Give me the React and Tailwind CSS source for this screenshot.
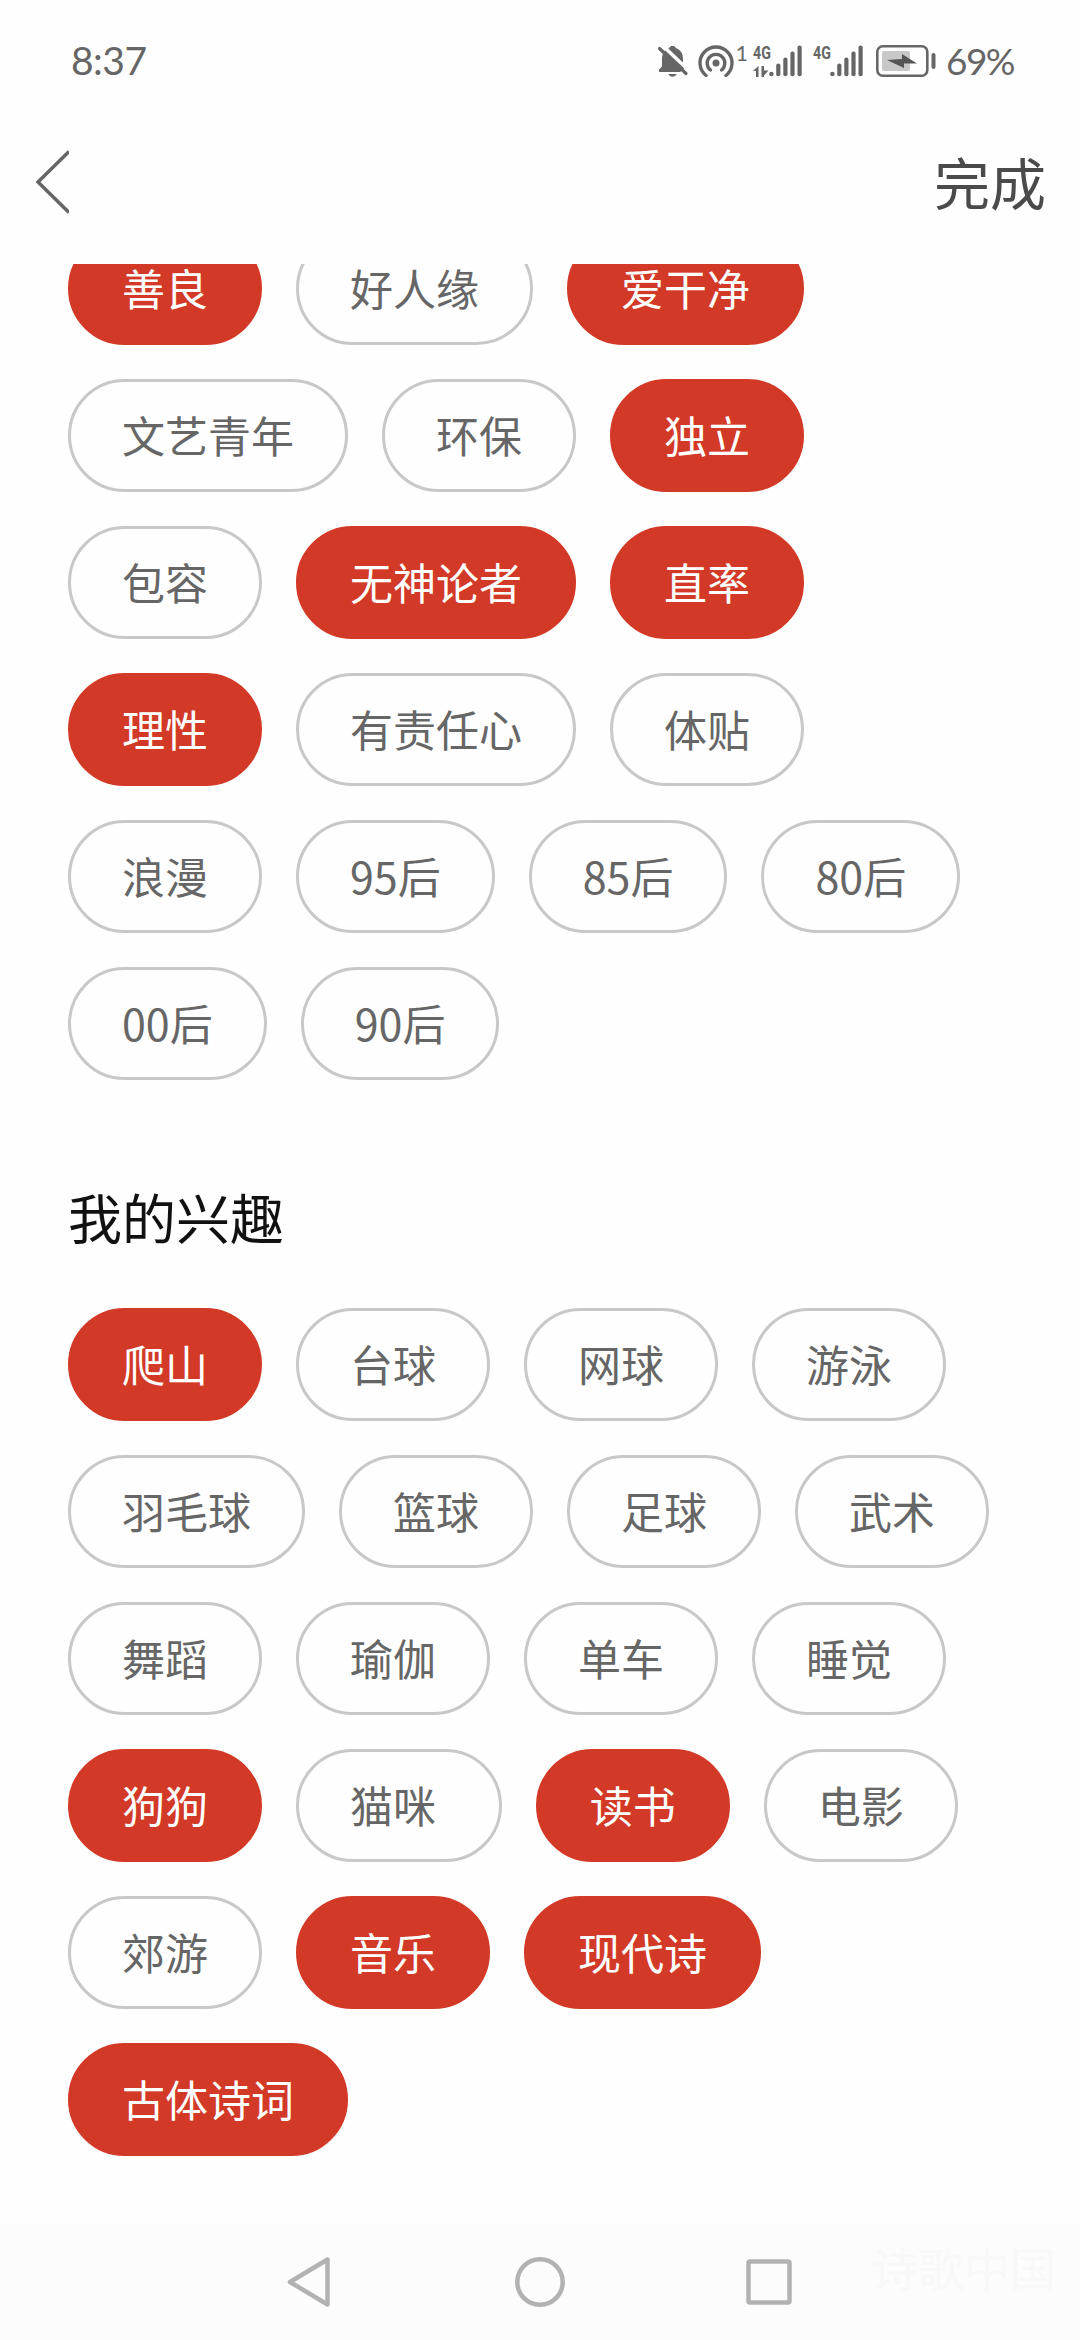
import { useState } from 'react';

const FONT = "font-['Noto_Sans_CJK_SC',sans-serif]";

const personalityRows = [
  ['善良', '好人缘', '爱干净'],
  ['文艺青年', '环保', '独立'],
  ['包容', '无神论者', '直率'],
  ['理性', '有责任心', '体贴'],
  ['浪漫', '95后', '85后', '80后'],
  ['00后', '90后'],
];

const hobbyRows = [
  ['爬山', '台球', '网球', '游泳'],
  ['羽毛球', '篮球', '足球', '武术'],
  ['舞蹈', '瑜伽', '单车', '睡觉'],
  ['狗狗', '猫咪 ', '读书', '电影'],
  ['郊游', '音乐', '现代诗'],
  ['古体诗词'],
];

const defaultSelected = [
  '善良', '爱干净', '独立', '无神论者', '直率', '理性',
  '爬山', '狗狗', '读书', '音乐', '现代诗', '古体诗词',
];

const SignalBars = () => (
  <svg width="34" height="32" viewBox="0 0 34 32" fill="#666">
    <circle cx="2.4" cy="29" r="2.3" />
    <rect x="7.2" y="18.5" width="4.2" height="12.7" rx="2" />
    <rect x="14.3" y="12.5" width="4.2" height="18.7" rx="2" />
    <rect x="21.4" y="6.5" width="4.2" height="24.7" rx="2" />
    <rect x="28.5" y="0.5" width="4.2" height="30.7" rx="2" />
  </svg>
);

const StatusBar = () => (
  <div className="flex h-[124px] shrink-0 items-center justify-between pb-[3px] pl-[71px] pr-[66px] text-[#666]">
    <span className="font-['Lato',sans-serif] text-[39px] tracking-[-0.5px]">8:37</span>
    <div className="flex items-center">
      {/* Muted bell */}
      <svg width="32" height="32" viewBox="0 0 32 32" fill="#666">
        <path d="M2 27v-2.500l3-3V14C5 8.500 7.500 4.500 12 3.200 12.700 1.600 14 1 15.500 1s2.800.6 3.500 2.200c4.500 1.300 7 5.300 7 10.800v7.500l3 3V27Z" />
        <path d="M11.500 29h8c-.6 1.900-2 2.700-4 2.700s-3.400-.8-4-2.700Z" />
        <path d="M5 0 33 26.500" stroke="#fefefe" strokeWidth="3.500" />
        <path d="M23 27H33v-8Z" fill="#fefefe" />
        <path d="M2.500 3.500 29 28.500" stroke="#666" strokeWidth="3.200" strokeLinecap="round" />
      </svg>
      {/* Hotspot */}
      <svg className="ml-[9px]" width="36" height="34" viewBox="0 0 36 34" fill="none" stroke="#666" strokeWidth="3.400" strokeLinecap="round">
        <circle cx="18" cy="19" r="3.500" fill="#666" stroke="none" />
        <path d="M12.500 26a8.800 8.800 0 1 1 11 0" />
        <path d="M8 31.500a16 16 0 1 1 20 0" />
      </svg>
      <span className="mb-4 ml-0.5 font-['Lato',sans-serif] text-[21px] leading-5">1</span>
      <div className="ml-[5px] flex h-8 w-4 flex-col justify-between">
        <span className="origin-left scale-x-75 font-['Roboto',sans-serif] text-[19px] font-bold leading-[15px]">4G</span>
        <svg width="16" height="11" viewBox="0 0 16 11" fill="#666">
          <path d="M0 5 5.500 0V11H3V5ZM8.500 0H11V4.500H15.500L11 9.500V11H8.500Z" />
        </svg>
      </div>
      <SignalBars />
      <div className="ml-2.5 flex h-8 w-[17px] items-start">
        <span className="origin-left scale-x-75 font-['Roboto',sans-serif] text-[19px] font-bold leading-[15px]">4G</span>
      </div>
      <SignalBars />
      <svg className="ml-3" width="60" height="32" viewBox="0 0 60 32">
        <rect x="1.300" y="1.300" width="50" height="29.400" rx="5.500" fill="none" stroke="#666" strokeWidth="2.600" />
        <rect x="6" y="6" width="28" height="20" rx="2" fill="#c8c8c8" />
        <path d="M11 15 26 14V9l15 9.500-13 0V23Z" fill="#555" />
        <rect x="55.500" y="8" width="4" height="16" rx="2" fill="#666" />
      </svg>
      <span className="ml-2.5 font-['Lato',sans-serif] text-[37px] tracking-[-1.5px]">69%</span>
    </div>
  </div>
);

const Tag = ({ label, active, onClick }) => (
  <button
    onClick={onClick}
    className={`h-[113px] whitespace-pre rounded-full border-3 px-[51px] pb-[3px] text-[43px] leading-none [word-spacing:2px] ${
      active ? 'border-[#d23926] bg-[#d23926] text-white' : 'border-[#c8c8c8] text-[#666]'
    }`}
  >
    {label}
  </button>
);

const TagRows = ({ rows, selected, onToggle }) => (
  <div className="flex flex-col gap-[34px]">
    {rows.map((row) => (
      <div key={row[0]} className="flex gap-[34px]">
        {row.map((label) => (
          <Tag key={label} label={label} active={selected.includes(label)} onClick={() => onToggle(label)} />
        ))}
      </div>
    ))}
  </div>
);

const NavBar = () => (
  <div className="flex h-[116px] shrink-0 items-center bg-[#fcfcfc] pl-[285px]">
    <svg width="48" height="54" viewBox="0 0 48 54" fill="none" stroke="#b2b2b2" strokeWidth="4.500" strokeLinejoin="round">
      <path d="M42.500 4.500v45L5 27Z" />
    </svg>
    <svg className="ml-[180px]" width="54" height="54" viewBox="0 0 54 54" fill="none" stroke="#b2b2b2" strokeWidth="4.500">
      <circle cx="27" cy="27" r="22.700" />
    </svg>
    <svg className="ml-[177px]" width="50" height="54" viewBox="0 0 50 54" fill="none" stroke="#b2b2b2" strokeWidth="4.500">
      <rect x="4.500" y="6.500" width="41" height="41" rx="1.500" />
    </svg>
    <span className="mb-8 ml-[78px] text-[46px] leading-none text-[#f9f8f8]">诗歌中国</span>
  </div>
);

const App = () => {
  const [selected, setSelected] = useState(defaultSelected);

  const toggle = (label) => {
    setSelected((prev) => (prev.includes(label) ? prev.filter((t) => t !== label) : [...prev, label]));
  };

  return (
    <div className={`flex h-[2340px] w-[1080px] flex-col overflow-hidden bg-[#fefefe] ${FONT}`}>
      <StatusBar />

      {/* Header */}
      <div className="flex h-[140px] shrink-0 items-start justify-between pl-[35px] pr-[34px]">
        <svg className="mt-[26px]" width="34" height="64" viewBox="0 0 34 64" fill="none" stroke="#666" strokeWidth="3.500">
          <path d="M34 1.500 3 32l31 30.500" />
        </svg>
        <button className="mt-[29px] text-[56px] leading-none text-[#4a4a4a]">完成</button>
      </div>

      {/* Scrolled tag list */}
      <div className="flex min-h-0 flex-1 flex-col overflow-hidden px-[68px]">
        <div className="-mt-8">
          <TagRows rows={personalityRows} selected={selected} onToggle={toggle} />
        </div>
        <h2 className="mb-[64px] mt-[110px] text-[54px] leading-[54px] text-[#111]">我的兴趣</h2>
        <TagRows rows={hobbyRows} selected={selected} onToggle={toggle} />
      </div>

      <NavBar />
    </div>
  );
};

export default App;
